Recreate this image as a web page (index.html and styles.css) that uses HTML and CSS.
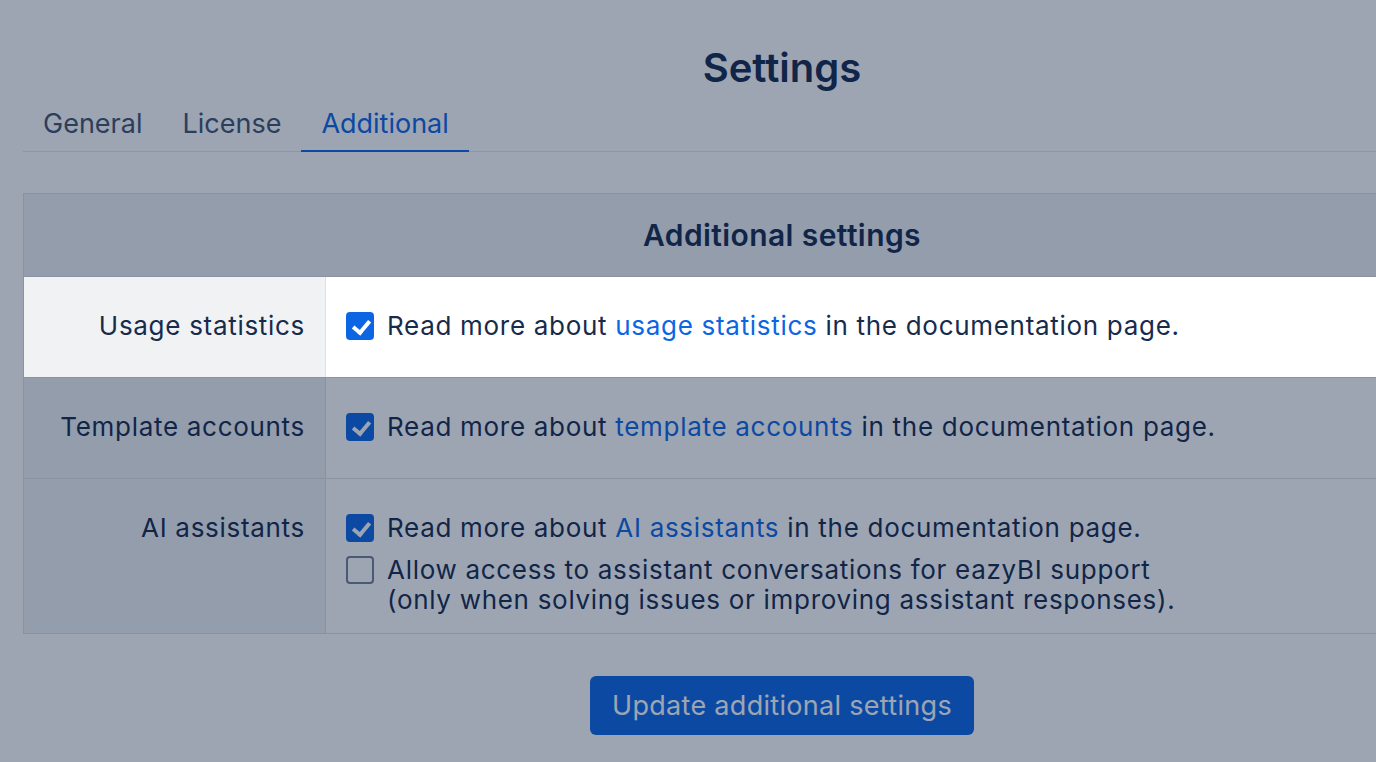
FILE: index.html
```html
<!DOCTYPE html>
<html lang="en">
<head>
  <meta charset="UTF-8" />
  <meta name="viewport" content="width=device-width, initial-scale=1.0"/>
  <title>Settings</title>
  <link rel="stylesheet" href="styles.css">
</head>
<body>
  <main class="page">
    <h1 class="page-title">Settings</h1>

    <nav class="tabs">
      <a class="tab" href="#general">General</a>
      <a class="tab" href="#license">License</a>
      <a class="tab active" href="#additional">Additional</a>
    </nav>

    <form class="settings-form" onsubmit="return false">
      <section class="settings-table">
        <div class="table-head">Additional settings</div>

        <!-- current step of the guided tour, lifted above the overlay -->
        <div class="row spotlight">
          <div class="row-label">Usage statistics</div>
          <div class="row-value">
            <label class="option">
              <input type="checkbox" checked>
              <span>Read more about <a href="#usage">usage statistics</a> in the documentation page.</span>
            </label>
          </div>
        </div>

        <div class="row">
          <div class="row-label">Template accounts</div>
          <div class="row-value">
            <label class="option">
              <input type="checkbox" checked>
              <span>Read more about <a href="#templates">template accounts</a> in the documentation page.</span>
            </label>
          </div>
        </div>

        <div class="row row-multi">
          <div class="row-label">AI assistants</div>
          <div class="row-value">
            <label class="option">
              <input type="checkbox" checked>
              <span>Read more about <a href="#ai">AI assistants</a> in the documentation page.</span>
            </label>
            <label class="option">
              <input type="checkbox">
              <span>Allow access to assistant conversations for eazyBI support<br>(only when solving issues or improving assistant responses).</span>
            </label>
          </div>
        </div>
      </section>

      <div class="actions">
        <button type="submit" class="btn-primary">Update additional settings</button>
      </div>
    </form>
  </main>

  <div class="tour-overlay"></div>
</body>
</html>
```

FILE: styles.css
```css
html,
body {
  height: 100%;
}

body {
  margin: 0;
  padding: 0;
  font-family: Inter, "Noto Sans", sans-serif;
  color: #172b4d;
  background: #fff;
  overflow: hidden;
}

.page {
  width: 1518px;
  margin-left: 23px;
  padding-top: 42px;
}

.page-title {
  margin: 0;
  font-size: 40px;
  line-height: 52px;
  font-weight: 600;
  text-align: center;
}

/* tabs */

.tabs {
  display: flex;
  border-bottom: 1px solid #e4e6ea;
}

.tab {
  padding: 14px 20px 10px;
  font-size: 27px;
  line-height: 32px;
  color: #44546f;
  text-decoration: none;
  border-bottom: 2px solid transparent;
  margin-bottom: -1px;
}

.tab.active {
  color: #0c66e4;
  border-bottom-color: #0c66e4;
}

/* settings table */

.settings-table {
  margin-top: 41px;
  border: 1px solid #dcdfe4;
}

.table-head {
  height: 82px;
  display: flex;
  align-items: center;
  justify-content: center;
  background-color: #f1f2f4;
  border-bottom: 1px solid #dcdfe4;
  font-size: 30px;
  letter-spacing: 0.4px;
  font-weight: 600;
}

.row {
  display: flex;
  background-color: #fff;
  font-size: 26px;
  line-height: 30px;
  letter-spacing: 0.7px;
}

.row + .row {
  border-top: 1px solid #dcdfe4;
}

.row-label {
  width: 261px;
  flex-shrink: 0;
  padding: 34px 20px 36px;
  background-color: #f1f2f4;
  border-right: 1px solid #dcdfe4;
  text-align: right;
}

.row-value {
  flex: 1;
  display: flex;
  flex-direction: column;
  gap: 12px;
  padding: 34px 20px 36px;
}

.row-multi .row-value {
  padding-bottom: 18px;
}

.row-value a {
  color: #0c66e4;
  text-decoration: none;
}

.option {
  display: flex;
  align-items: flex-start;
  gap: 13px;
}

.option input {
  appearance: none;
  -webkit-appearance: none;
  position: relative;
  flex-shrink: 0;
  width: 28px;
  height: 28px;
  margin: 1px 0 0;
  border: 2px solid #758195;
  border-radius: 4px;
  background-color: #fff;
  box-sizing: border-box;
}

.option input:checked {
  background-color: #0c66e4;
  border-color: #0c66e4;
}

.option input:checked::after {
  content: "";
  position: absolute;
  left: 8px;
  top: 3px;
  width: 7px;
  height: 13px;
  border: solid #fff;
  border-width: 0 4px 4px 0;
  transform: rotate(40deg);
}

/* tour overlay dims the page, the spotlight row sits above it */
.tour-overlay {
  position: fixed;
  inset: 0;
  z-index: 10;
  background-color: rgba(9, 30, 66, 0.4);
}

.spotlight {
  position: relative;
  z-index: 11;
}

.actions {
  display: flex;
  justify-content: center;
  margin-top: 42px;
}

.btn-primary {
  width: 384px;
  height: 59px;
  border: none;
  border-radius: 6px;
  background-color: #0c66e4;
  color: #fff;
  font-family: inherit;
  font-size: 27px;
  letter-spacing: 0.3px;
  cursor: pointer;
}
```
